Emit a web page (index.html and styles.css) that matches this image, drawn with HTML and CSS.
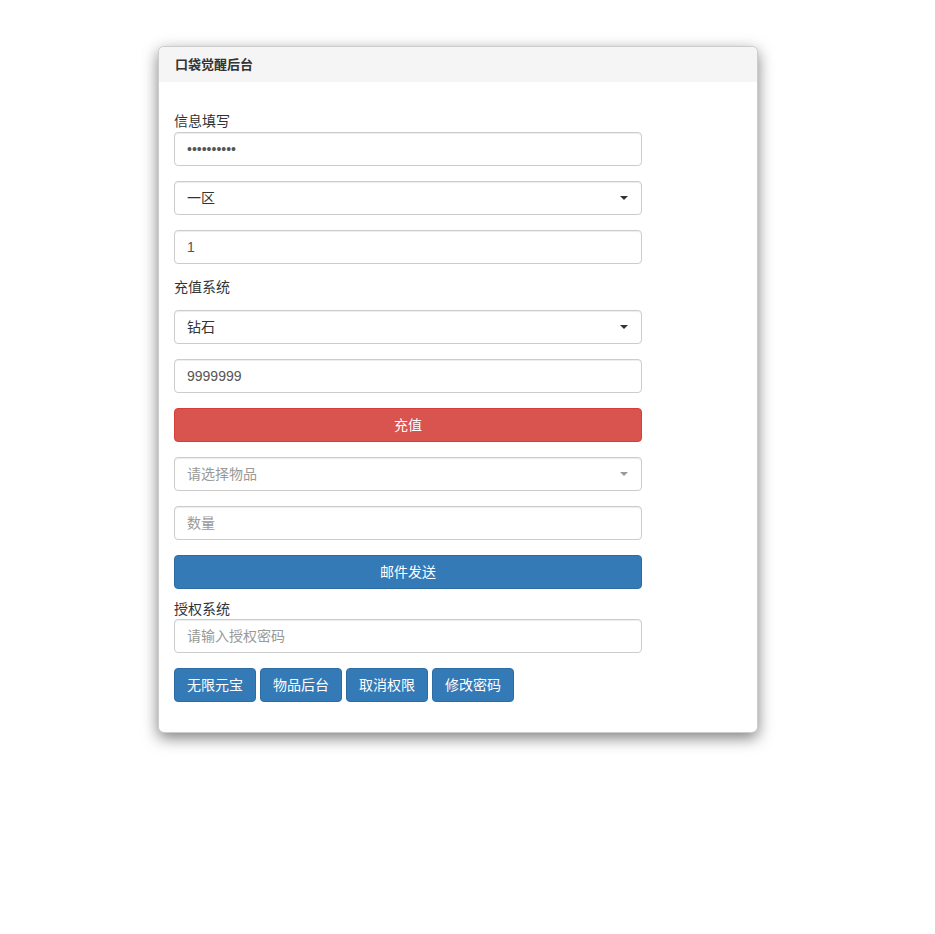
FILE: index.html
```html
<!DOCTYPE html>
<html lang="zh-CN">
<head>
  <meta charset="UTF-8">
  <meta name="viewport" content="width=device-width, initial-scale=1.0">
  <title>口袋觉醒后台</title>
  <link rel="stylesheet" href="styles.css">
</head>
<body>
  <div class="panel">
    <div class="panel-heading">口袋觉醒后台</div>

    <div class="panel-body">
      <!-- 信息填写 -->
      <label class="label-tight">信息填写</label>
      <input class="form-control" type="password" value="1234567890">
      <div class="form-control select">
        <span>一区</span>
        <span class="caret"></span>
      </div>
      <input class="form-control" type="text" value="1">

      <!-- 充值系统 -->
      <label class="label-block">充值系统</label>
      <div class="form-control select">
        <span>钻石</span>
        <span class="caret"></span>
      </div>
      <input class="form-control" type="text" value="9999999">
      <button class="btn btn-danger btn-block">充值</button>

      <div class="form-control select placeholder">
        <span>请选择物品</span>
        <span class="caret"></span>
      </div>
      <input class="form-control" type="text" placeholder="数量">
      <button class="btn btn-primary btn-block last">邮件发送</button>

      <!-- 授权系统 -->
      <label class="label-auth">授权系统</label>
      <input class="form-control" type="password" placeholder="请输入授权密码">

      <div class="btn-row">
        <button class="btn btn-primary">无限元宝</button>
        <button class="btn btn-primary">物品后台</button>
        <button class="btn btn-primary">取消权限</button>
        <button class="btn btn-primary">修改密码</button>
      </div>
    </div>
  </div>
</body>
</html>
```

FILE: styles.css
```css
* {
  box-sizing: border-box;
}

html {
  background-color: #fff;
}

body {
  font-family: "Liberation Sans", "Noto Sans CJK SC", sans-serif;
  font-size: 14px;
  line-height: 20px;
  color: #333;
  margin: 0;
  min-height: 100vh;
  padding: 46px 0 40px 158px;
}

.panel {
  width: 600px;
  background-color: #fff;
  border: 1px solid rgba(0, 0, 0, 0.2);
  border-radius: 6px;
  box-shadow: 0 5px 15px rgba(0, 0, 0, 0.5);
  overflow: hidden;
}

.panel-heading {
  background-color: #f5f5f5;
  padding: 8px 16px 7px;
  height: 35px;
  font-weight: bold;
  font-size: 13px;
  color: #333;
}

.panel-body {
  padding: 30px 15px 30px;
  width: 498px;
  display: flex;
  flex-direction: column;
}

.panel-body label {
  display: block;
  height: 20px;
}

.label-tight {
  margin-top: -1px;
  margin-bottom: 1px;
}

.label-block {
  margin: -2px 0 13px;
}

.form-control {
  display: block;
  width: 100%;
  height: 34px;
  padding: 6px 12px;
  font-family: inherit;
  font-size: 14px;
  line-height: 20px;
  color: #555;
  background-color: #fff;
  border: 1px solid #ccc;
  border-radius: 4px;
  box-shadow: inset 0 1px 1px rgba(0, 0, 0, 0.075);
  margin: 0 0 15px;
}

.form-control::placeholder {
  color: #999;
}

.select {
  display: flex;
  justify-content: space-between;
  align-items: center;
  color: #333;
  padding-right: 13px;
}

.select.placeholder {
  color: #999;
}

.caret {
  width: 0;
  height: 0;
  border-top: 4px solid #333;
  border-left: 4px solid transparent;
  border-right: 4px solid transparent;
}

.placeholder .caret {
  border-top-color: #999;
}

.btn {
  display: inline-block;
  height: 34px;
  padding: 6px 12px;
  font-family: inherit;
  font-size: 14px;
  line-height: 20px;
  color: #fff;
  border: 1px solid transparent;
  border-radius: 4px;
  cursor: pointer;
}

.btn-block {
  width: 100%;
  margin-bottom: 15px;
}

.btn-block.last {
  margin-bottom: 10px;
}

.btn-danger {
  background-color: #d9534f;
  border-color: #d43f3a;
}

.btn-primary {
  background-color: #337ab7;
  border-color: #2e6da4;
}

.btn-row {
  display: flex;
  gap: 4px;
}
```
